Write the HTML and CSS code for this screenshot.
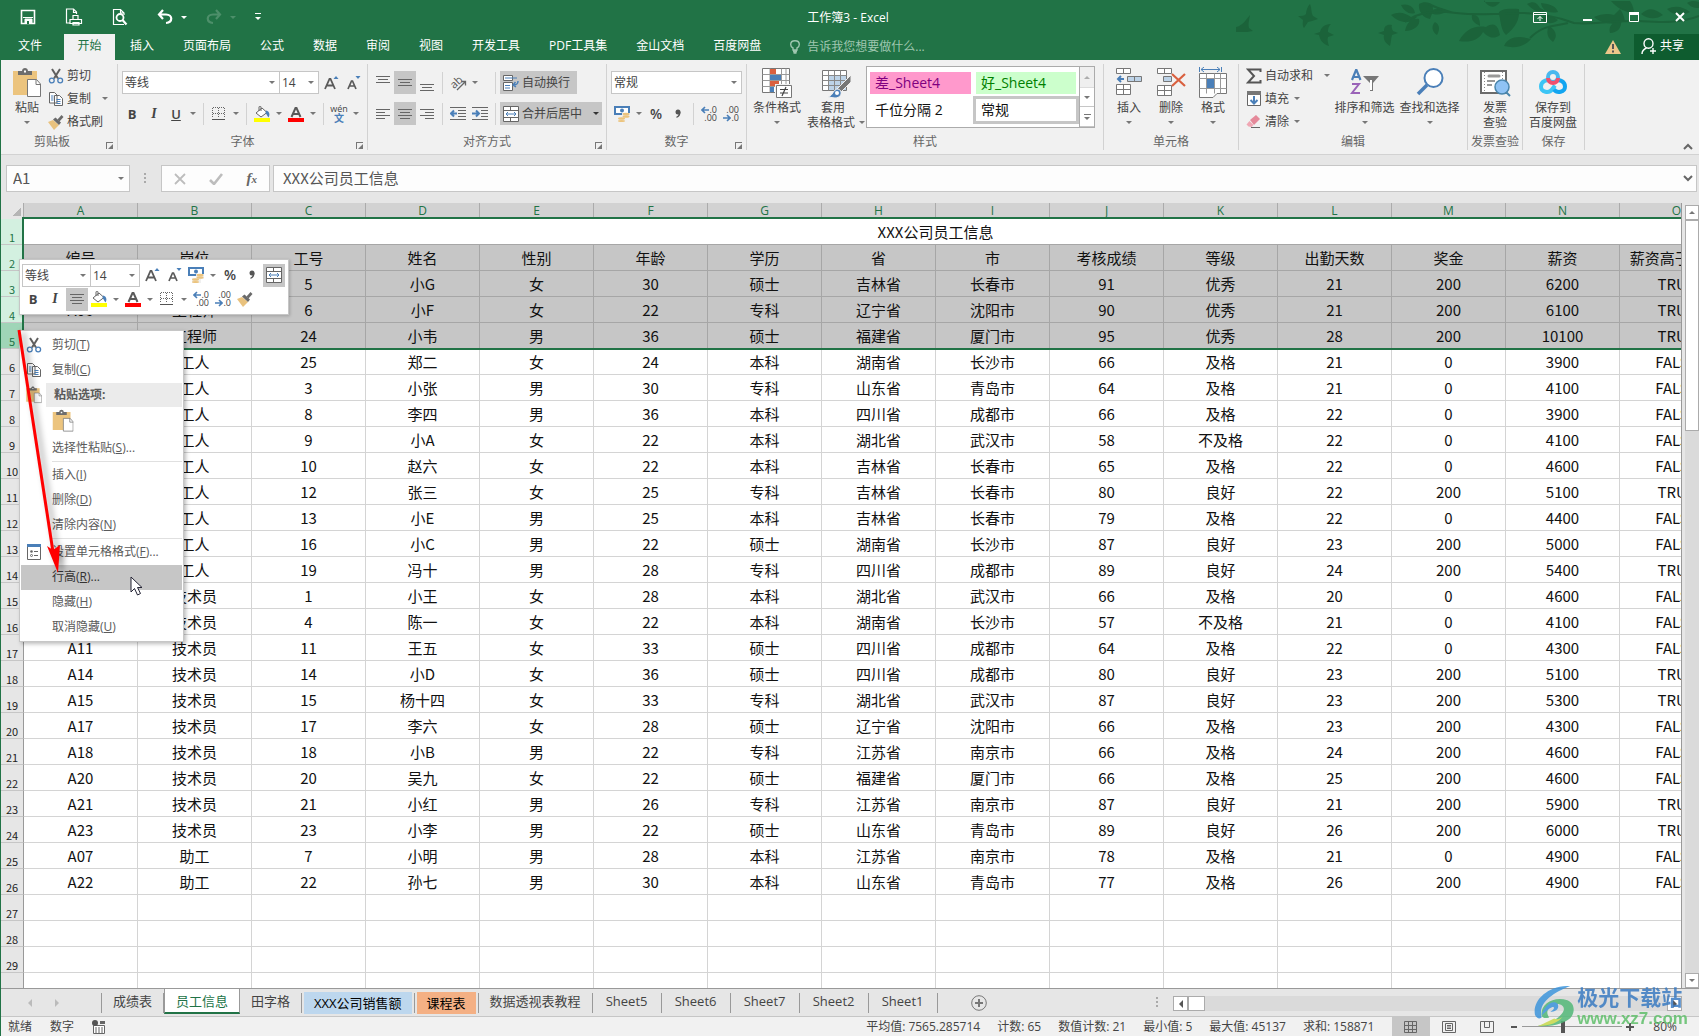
FILE: index.html
```html
<!DOCTYPE html>
<html lang="zh-CN">
<head>
<meta charset="utf-8">
<title>工作簿3 - Excel</title>
<link rel="stylesheet" href="styles.css">
</head>
<body>
<svg class="sprite" aria-hidden="true">
  <symbol id="i-cut" viewBox="0 0 16 16"><path d="M4 1l6 9.500M12 1L6 10.500" stroke="#5f5f5f" stroke-width="2" fill="none"/><circle cx="3.800" cy="12.500" r="2.400" fill="none" stroke="#4a7fb8" stroke-width="1.300"/><circle cx="12.200" cy="12.500" r="2.400" fill="none" stroke="#4a7fb8" stroke-width="1.300"/></symbol>
  <symbol id="i-copy" viewBox="0 0 16 16"><path d="M1.500 1.500h5l2.500 2.500v8h-7.500zM6.500 4.500h5l3 3v7h-8z" fill="#fff" stroke="#666"/><path d="M3 5h2.500M3 7h2.500M3 9h2.500M8.500 8.500h4M8.500 10.500h4M8.500 12.500h4" stroke="#4a7fb8"/></symbol>
  <symbol id="i-brush" viewBox="0 0 16 16"><path d="M0 8l5-2 6 5-5 5z" fill="#e9c27e"/><path d="M5 5.500l2.500-2 5.500 5-2 2.500z" fill="#6a6a6a"/><path d="M9.500 5.500l4-4.500 2 2-4 4.500z" fill="#6a6a6a"/></symbol>
  <symbol id="i-paste" viewBox="0 0 28 32"><path d="M0 4h24v24H0z" fill="#ecc47e"/><path d="M5 8V4h4c0-4 6-4 6 0h4v4z" fill="#6d6d6d"/><path d="M11 4.500h2" stroke="#fff" stroke-width="2"/><path d="M14.500 12.500h9l4 4.500v12.500h-13z" fill="#fff" stroke="#777"/><path d="M23 12.500v5h5" fill="none" stroke="#777"/></symbol>
  <symbol id="i-grow" viewBox="0 0 16 16"><path d="M2 14L6.500 4h1L12 14M3.500 10.500h7" fill="none" stroke="#5a5a5a" stroke-width="1.800"/><path d="M10.500 4L13 1l2.500 3z" fill="#4a7fb8"/></symbol>
  <symbol id="i-shrink" viewBox="0 0 16 16"><path d="M3 14l3.500-8h1L11 14M4.500 11h5" fill="none" stroke="#5a5a5a" stroke-width="1.700"/><path d="M10.500 1h5L13 4z" fill="#4a7fb8"/></symbol>
  <symbol id="i-border" viewBox="0 0 16 16"><path d="M2 1.500h12M2 7.500h12M1.500 2v10M7.500 2v10M13.500 2v10" stroke="#666" stroke-dasharray="1 1" fill="none"/><path d="M1 13.500h13" stroke="#555"/></symbol>
  <symbol id="i-fill" viewBox="0 0 16 16"><path d="M2 7l6-5 5 4.500-6 4.500z" fill="#fff" stroke="#666"/><path d="M7 5V1c0-1-2-1-2 0v4" fill="none" stroke="#666"/><path d="M12 4.500c3 .5 4.500 3.500 2.500 7-1-1-1.500-3-3-4.500z" fill="#4a7fb8"/><path d="M0 12h16v4H0z" fill="#ff0"/></symbol>
  <symbol id="i-color" viewBox="0 0 16 16"><path d="M3.500 11L7.500 2h1l4 9M5 8h6" fill="none" stroke="#5a5a5a" stroke-width="2"/><path d="M0 12h16v4H0z" fill="#f00"/></symbol>
  <symbol id="i-top" viewBox="0 0 16 16"><path d="M1 1.500h14M3 4.500h10M1 7.500h14" stroke="#666"/></symbol>
  <symbol id="i-mid" viewBox="0 0 16 16"><path d="M1 4.500h14M3 7.500h10M1 10.500h14" stroke="#666"/></symbol>
  <symbol id="i-bot" viewBox="0 0 16 16"><path d="M1 9.500h14M3 12.500h10M1 15.500h14" stroke="#666"/></symbol>
  <symbol id="i-left" viewBox="0 0 16 16"><path d="M1 3.500h14M1 6.500h9M1 9.500h14M1 12.500h9" stroke="#666"/></symbol>
  <symbol id="i-center" viewBox="0 0 16 16"><path d="M1 3.500h14M3 6.500h10M1 9.500h14M3 12.500h10" stroke="#666"/></symbol>
  <symbol id="i-right" viewBox="0 0 16 16"><path d="M1 3.500h14M6 6.500h9M1 9.500h14M6 12.500h9" stroke="#666"/></symbol>
  <symbol id="i-outdent" viewBox="0 0 16 16"><path d="M0 1.500h16M8 4.500h8M8 7.500h8M8 10.500h8M0 13.500h16" stroke="#666"/><path d="M7 7.500H2M4 4.500l-3 3 3 3" stroke="#4a7fb8" stroke-width="2" fill="none"/></symbol>
  <symbol id="i-indent" viewBox="0 0 16 16"><path d="M0 1.500h16M9 4.500h7M9 7.500h7M9 10.500h7M0 13.500h16" stroke="#666"/><path d="M0 7.500h6M4 4.500l3 3-3 3" stroke="#4a7fb8" stroke-width="2" fill="none"/></symbol>
  <symbol id="i-merge" viewBox="0 0 16 16"><path d="M.5.5h15v15H.5zM.5 4.500h15M.5 11.500h15M7.500.5v4M7.500 11.500v4" fill="#fff" stroke="#666"/><path d="M3 8h10M5 6L3 8l2 2M11 6l2 2-2 2" stroke="#4a7fb8" fill="none"/></symbol>
  <symbol id="i-wrap" viewBox="0 0 16 16"><path d="M.5.5h9v5h-9zM.5 7.500h9v8h-9z" fill="#fff" stroke="#666"/><path d="M2 3h12M2 10.500h5M2 13h5" stroke="#4a7fb8"/><path d="M15 6c0 3-1 4-5 4M12.500 7L10 10l3 2" stroke="#4a7fb8" fill="none" stroke-width="1.500"/></symbol>
  <symbol id="i-money" viewBox="0 0 16 16"><path d="M0 0h16v9H0z" fill="#4a7fb8"/><path d="M2 2h12v5H2z" fill="#fff"/><circle cx="8" cy="4.500" r="2" fill="#4a7fb8"/><path d="M8 7h8v5h-3v4H4v-5h4z" fill="#f0f0f0"/><g fill="#ecc47e"><ellipse cx="12" cy="8" rx="3.500" ry="1.300"/><ellipse cx="12" cy="10.500" rx="3.500" ry="1.300"/><ellipse cx="7.500" cy="12.500" rx="3.500" ry="1.300"/><ellipse cx="7.500" cy="15" rx="3.500" ry="1"/></g></symbol>
  <symbol id="i-comma" viewBox="0 0 16 16"><circle cx="8" cy="6" r="2.500" fill="#555"/><path d="M10.500 6c0 3-1 5-4 6v-1.500c1.500-.5 2.200-2 2.200-3.500z" fill="#555"/></symbol>
  <symbol id="i-arl" viewBox="0 0 8 8"><path d="M8 4H2M4 1L1 4l3 3" stroke="#4a7fb8" stroke-width="1.600" fill="none"/></symbol>
  <symbol id="i-arr" viewBox="0 0 8 8"><path d="M0 4h6M4 1l3 3-3 3" stroke="#4a7fb8" stroke-width="1.600" fill="none"/></symbol>
</svg>

<div class="window">
  <header class="top">
    <svg class="foliage" viewBox="0 0 460 60" aria-hidden="true">
      <g fill="#1b633a">
        <path d="M-3 27c6-1 9-6 14-12-1 6-2 9-1 13l4 3-6 1-11 0z"/>
        <path d="M59 16c4 0 6 0 8-2 0-4 2-8 4-10 2 5 1 9 3 12l5 3-6 2-4 1-4 6c-2-3-1-6-1-8z"/>
        <path d="M75 34l6-2c1-4 4-8 11-8-3 3-3 6-3 8l6 3-6 2c-1 3 0 6 1 9-6-2-9-6-10-11z"/>
        <path d="M139 33l6-2c0-5 3-7 8-6-1 2 0 4 1 6l5 2-6 2c-1 4-1 7-2 11-5-3-7-7-6-11z"/>
        <path d="M152 15c8-4 14-2 20 2l6 0c-7 8-18 6-26-2zM162 5c8-2 13 2 14 8-6 2-11-2-14-8zM166 31c2-9 7-13 14-12 2 6-5 12-14 12zM180 4c7-4 15-1 14 7l-3 8c-7-1-12-8-11-15zM196 22c5 3 5 8 2 13-5-3-6-9-2-13zM190 12c7-5 15-4 18-1-5 4-12 5-18 1z"/>
        <path d="M220 41c6-11 15-16 27-14 8-5 12-2 14 8-8 6-14 0-17-3-4 8-13 11-24 9zM233 15c7-1 8 5 8 11-6-3-9-6-8-11zM245 2h16c-5 7-12 6-16-2zM260 14c-1-4 6-6 20-5 1 11-4 19-13 26-5-5-5-12-7-21z"/>
        <path d="M265 46c4-9 14-11 27-7-6 7-15 10-27 7zM288 4c8-4 10 0 13 4l6 3c-8 3-14-2-19-7zM302 3c9 1 15 3 17 9-10 2-16-2-17-9zM310 26c7 4 9 10 4 16-6-4-7-10-4-16zM301 18c5-3 12-3 18 2-6 5-13 4-18-2z"/>
        <path d="M355 17c7-3 14-4 20-2l6-6c3 4 4 8 5 12-8 4-22 4-31-4zM371 33c-2-7 3-12 11-12 1 7-4 12-11 12zM372 1h19c3 4 4 9 4 13-9-2-17-6-23-13zM402 14c8-8 15-5 22 1-6 4-14 5-22-1zM428 9c9-4 16-2 23 3-8 4-17 4-23-3zM448 3c5-3 8-2 12-1v6c-6 0-9-2-12-5z"/>
      </g>
      <path d="M166 22c16-12 34-11 51-9s34 1 49 1M266 14c28-4 56 4 69 9 22 2 45-3 64-2s42 3 61-5M291 38c14-14 27-12 38-15M190 4c11 6 18 7 26 9" fill="none" stroke="#1b633a" stroke-width="2"/>
    </svg>
    <div class="titlebar">
      <div class="quick">
        <button aria-label="保存"><svg width="16" height="16" viewBox="0 0 16 16"><path d="M1.500 1.500h13v13h-13z" fill="none" stroke="#fff" stroke-width="1.600"/><path d="M3 8.500h10M5 10h7v4H5z" fill="#fff" stroke="#fff" stroke-width="1"/><path d="M7 12h2v3H7z" fill="#217346"/></svg></button>
        <button aria-label="快速打印"><svg width="18" height="18" viewBox="0 0 18 18" fill="none" stroke="#fff" stroke-width="1.200"><path d="M5 15H1.500v-14h7l3 3v2M8.500 1v3.500h3"/><path d="M5 11.500h11.500v4H5zM8 11V7.500h5V11M8 14.500h6v2.500H8z"/></svg></button>
        <button aria-label="打印预览"><svg width="16" height="18" viewBox="0 0 16 18" fill="none" stroke="#fff" stroke-width="1.200"><path d="M12 16.500H1.500v-15h7l3.500 3.500v2M8.500 1.500V5H12"/><circle cx="8" cy="9.500" r="3.500" stroke-width="1.800"/><path d="M10.500 12l4 4.500" stroke-width="2.200"/></svg></button>
        <button aria-label="撤消"><svg width="16" height="16" viewBox="0 0 16 16" fill="none" stroke="#fff" stroke-width="2.200"><path d="M6 1L2 5.500 6 10M2 5.500h7c7 0 7 8 0 8.500"/></svg></button>
        <button class="drop white" aria-label="撤消列表"></button>
        <button aria-label="恢复"><svg width="16" height="16" viewBox="0 0 16 16" fill="none" stroke="#4d8f6a" stroke-width="2.200"><path d="M10 1l4 4.500L10 10M14 5.500H7c-7 0-7 8 0 8.500"/></svg></button>
        <button class="drop faint" aria-label="恢复列表"></button>
        <button class="custom" aria-label="自定义快速访问工具栏"><svg width="6" height="8" viewBox="0 0 6 8"><path d="M0 .5h6" stroke="#fff"/><path d="M0 4h6L3 7z" fill="#fff"/></svg></button>
      </div>
      <h1>工作簿3 - Excel</h1>
      <div class="controls">
        <button aria-label="功能区显示选项"><svg width="14" height="11" viewBox="0 0 14 11" fill="none" stroke="#fff"><path d="M.5.5h13v10H.5zM1 2.500h12M7 9V4.500M4.500 7L7 4.500 9.500 7"/></svg></button>
        <button aria-label="最小化"><svg width="10" height="10" viewBox="0 0 10 10"><path d="M0 7h9v2H0z" fill="#fff"/></svg></button>
        <button aria-label="最大化"><svg width="10" height="10" viewBox="0 0 10 10"><path d="M.5.5h9v9h-9z" fill="none" stroke="#fff"/><path d="M0 0h10v3H0z" fill="#fff"/></svg></button>
        <button aria-label="关闭"><svg width="10" height="10" viewBox="0 0 10 10"><path d="M1 1l8 8M9 1L1 9" stroke="#fff" stroke-width="2"/></svg></button>
      </div>
    </div>
    <nav class="tabs">
      <button class="file">文件</button>
      <button class="active">开始</button>
      <button>插入</button>
      <button>页面布局</button>
      <button>公式</button>
      <button>数据</button>
      <button>审阅</button>
      <button>视图</button>
      <button>开发工具</button>
      <button>PDF工具集</button>
      <button>金山文档</button>
      <button>百度网盘</button>
      <button class="tell"><svg width="10" height="14" viewBox="0 0 10 14" fill="none" stroke="#9fc7b0" stroke-width="1.400"><path d="M3 10V8C1 7 .7 5.500.7 4.500c0-5 8.600-5 8.600 0C9.300 5.500 9 7 7 8v2zM3 11.500h4M3.500 13h3"/></svg>告诉我您想要做什么...</button>
      <span class="warn"><svg width="16" height="14" viewBox="0 0 16 14"><path d="M8 0l8 14H0z" fill="#ecc78a"/><path d="M8 4v5M8 10.500v2" stroke="#555" stroke-width="2"/></svg></span>
      <button class="share"><svg width="16" height="17" viewBox="0 0 16 17" fill="none" stroke="#fff" stroke-width="1.400"><ellipse cx="7.500" cy="5.500" rx="4.500" ry="4.800"/><path d="M1 16c0-3 2-5 4.500-6M9 13h6M12 10v6"/></svg>共享</button>
    </nav>
  </header>

  <section class="ribbon" aria-label="功能区">
    <div class="group g-clip">
      <div class="body">
        <button class="big"><svg width="28" height="32"><use href="#i-paste"/></svg><span>粘贴</span><i class="caret"></i></button>
        <div class="stack">
          <button><svg width="16" height="16"><use href="#i-cut"/></svg>剪切</button>
          <button><svg width="16" height="16"><use href="#i-copy"/></svg>复制<i class="caret far"></i></button>
          <button><svg width="16" height="16"><use href="#i-brush"/></svg>格式刷</button>
        </div>
      </div>
      <div class="label">剪贴板<i class="launch"></i></div>
    </div>
    <div class="group g-font">
      <div class="rows">
        <div class="row combos">
          <select class="w-font" aria-label="字体"><option>等线</option></select><select class="w-size" aria-label="字号"><option>14</option></select>
          <button class="ib" aria-label="增大字号"><svg width="16" height="16"><use href="#i-grow"/></svg></button>
          <button class="ib" aria-label="减小字号"><svg width="16" height="16"><use href="#i-shrink"/></svg></button>
        </div>
        <div class="row">
          <button class="ib bold">B</button><button class="ib ital">I</button><button class="ib under">U</button><button class="drop" aria-label="下划线样式"></button><i class="sep"></i>
          <button class="ib" aria-label="边框"><svg width="16" height="16"><use href="#i-border"/></svg></button><button class="drop" aria-label="边框样式"></button><i class="sep"></i>
          <button class="ib" aria-label="填充颜色"><svg width="16" height="16"><use href="#i-fill"/></svg></button><button class="drop" aria-label="填充颜色列表"></button>
          <button class="ib" aria-label="字体颜色"><svg width="16" height="16"><use href="#i-color"/></svg></button><button class="drop" aria-label="字体颜色列表"></button><i class="sep"></i>
          <button class="ib wen"><span>wén</span><b>文</b></button><button class="drop" aria-label="拼音设置"></button>
        </div>
      </div>
      <div class="label">字体<i class="launch"></i></div>
    </div>
    <div class="group g-align">
      <div class="rows">
        <div class="row">
          <button class="ib" aria-label="顶端对齐"><svg width="16" height="16"><use href="#i-top"/></svg></button>
          <button class="ib on" aria-label="垂直居中"><svg width="16" height="16"><use href="#i-mid"/></svg></button>
          <button class="ib" aria-label="底端对齐"><svg width="16" height="16"><use href="#i-bot"/></svg></button><i class="sep"></i>
          <div class="pair"><button class="ib orient" aria-label="方向"><svg width="18" height="18" viewBox="0 0 18 18"><text x="1" y="13" transform="rotate(-42 6 9)">ab</text><path d="M8 16l8-8M12.500 7.500H16.500V11.500" fill="none" stroke="#666" stroke-width="1.300"/></svg></button><button class="drop" aria-label="方向列表"></button></div><i class="sep"></i>
          <button class="wide on w-wrap"><svg width="16" height="16"><use href="#i-wrap"/></svg>自动换行</button>
        </div>
        <div class="row">
          <button class="ib" aria-label="左对齐"><svg width="16" height="16"><use href="#i-left"/></svg></button>
          <button class="ib on" aria-label="居中"><svg width="16" height="16"><use href="#i-center"/></svg></button>
          <button class="ib" aria-label="右对齐"><svg width="16" height="16"><use href="#i-right"/></svg></button><i class="sep"></i>
          <div class="pair"><button class="ib" aria-label="减少缩进量"><svg width="16" height="16"><use href="#i-outdent"/></svg></button><button class="ib" aria-label="增加缩进量"><svg width="16" height="16"><use href="#i-indent"/></svg></button></div><i class="sep"></i>
          <button class="wide on w-merge"><svg width="16" height="16"><use href="#i-merge"/></svg>合并后居中<i class="caret far dark"></i></button>
        </div>
      </div>
      <div class="label">对齐方式<i class="launch"></i></div>
    </div>
    <div class="group g-num">
      <div class="rows">
        <div class="row"><select class="w-num" aria-label="数字格式"><option>常规</option></select></div>
        <div class="row">
          <button class="ib" aria-label="会计数字格式"><svg width="16" height="16"><use href="#i-money"/></svg></button><button class="drop" aria-label="货币列表"></button>
          <button class="ib pct">%</button><button class="ib" aria-label="千位分隔样式"><svg width="16" height="16"><use href="#i-comma"/></svg></button><i class="sep"></i>
          <button class="ib dec"><span><svg width="8" height="8"><use href="#i-arl"/></svg>.0</span><span>.00</span></button>
          <button class="ib dec"><span>.00</span><span><svg width="8" height="8"><use href="#i-arr"/></svg>.0</span></button>
        </div>
      </div>
      <div class="label">数字<i class="launch"></i></div>
    </div>
    <div class="group g-style">
      <div class="body">
        <button class="big w-cond"><svg width="32" height="32" viewBox="0 0 32 32"><path d="M1.500 1.500h27v24h-27z" fill="#fff" stroke="#777"/><path d="M9 1.500v24M20.500 1.500v24M25 1.500v24M1.500 7.500h27M1.500 13.500h27M1.500 19.500h27" stroke="#999"/><path d="M9 2h6v5H9zM9 14h9v5H9z" fill="#d9603f"/><path d="M9 8h11v5H9zM9 20h4v5H9z" fill="#4a7fb8"/><path d="M14 17h17v15H14z" fill="#f0f0f0"/><path d="M15.500 18.500h15v12h-15z" fill="#fff" stroke="#777"/><path d="M19 22.500h8M19 26h8M25 20l-4 9" stroke="#444" stroke-width="1.200"/></svg><span>条件格式</span><i class="caret"></i></button>
        <button class="big w-table"><svg width="32" height="32" viewBox="0 0 32 32"><path d="M2.500 3.500h24v20h-24z" fill="#fff" stroke="#777"/><path d="M9 9h17v14H9z" fill="#bdd3e8"/><path d="M8.500 3.500v20M14.500 3.500v20M20.500 3.500v20M2.500 8.500h24M2.500 13.500h24M2.500 18.500h24" stroke="#888"/><path d="M31 8v7L21 25l-4-3z" fill="#777" stroke="#f0f0f0"/><path d="M8 30c5-1 5-8 10-8 5 1 4 9-3 9z" fill="#4a7fb8" stroke="#f0f0f0"/><circle cx="17" cy="26" r="2" fill="#fff"/></svg><span>套用</span><span class="tail">表格格式<i class="caret"></i></span></button>
        <div class="gallery">
          <div class="cells">
            <button class="bad">差_Sheet4</button><button class="good">好_Sheet4</button>
            <button>千位分隔 2</button><button class="picked">常规</button>
          </div>
          <div class="scroller"><button class="dim" aria-label="上一行"><i class="caret up"></i></button><button aria-label="下一行"><i class="caret"></i></button><button aria-label="其他"><i class="bar"></i><i class="caret"></i></button></div>
        </div>
      </div>
      <div class="label">样式</div>
    </div>
    <div class="group g-cells">
      <div class="body">
        <button class="big"><svg width="28" height="32" viewBox="0 0 28 32" fill="#fff" stroke="#777"><path d="M1.500 1.500h14v5h-14zM8.500 1.500v5M1.500 17.500h14v10h-14zM8.500 17.500v10M1.500 22.500h14"/><path d="M12.500 9.500h14v5h-14zM19.500 9.500v5" fill="#bdd3e8"/><path d="M9 12H3M6 9l-3 3 3 3" fill="none" stroke="#4a7fb8" stroke-width="2"/></svg><span>插入</span><i class="caret"></i></button>
        <button class="big"><svg width="30" height="32" viewBox="0 0 30 32" fill="#fff" stroke="#777"><path d="M1.500 1.500h14v5h-14zM8.500 1.500v5M1.500 18.500h14v10h-14zM8.500 18.500v10M1.500 23.500h14"/><path d="M7.500 9.500h8v5h-8z" fill="#bdd3e8"/><path d="M16 7l13 12M29 7L16 19" stroke="#d9603f" stroke-width="2.200"/></svg><span>删除</span><i class="caret"></i></button>
        <button class="big"><svg width="28" height="32" viewBox="0 0 28 32" fill="#fff" stroke="#777"><path d="M.5 6.500h27v20H18l-4 4H.500z"/><path d="M7.500 6.500v20M15.500 6.500v20M21.500 6.500v20M.5 11.500h27M.5 21.500h27" stroke="#999"/><path d="M8 12h7v9H8z" fill="#4a7fb8" stroke="none"/><path d="M.5 0v5M22.500 0v5M2 2.500h19M5 0L2 2.500 5 5M18 0l3 2.500L18 5" stroke="#4a7fb8" fill="none"/></svg><span>格式</span><i class="caret"></i></button>
      </div>
      <div class="label">单元格</div>
    </div>
    <div class="group g-edit">
      <div class="body">
        <div class="stack">
          <button><svg width="16" height="16" viewBox="0 0 16 16"><path d="M14.500 4V1.500H2L8 8l-6 6.500h12.500V12" fill="none" stroke="#555" stroke-width="2"/></svg>自动求和<i class="caret far"></i></button>
          <button><svg width="16" height="16" viewBox="0 0 16 16"><path d="M1.500 1.500h13v13h-13z" fill="#fff" stroke="#666"/><path d="M1 0h14v4H1z" fill="#777"/><path d="M8 5v7M4.500 9L8 12.500 11.500 9" fill="none" stroke="#4a7fb8" stroke-width="2"/></svg>填充<i class="caret near"></i></button>
          <button><svg width="16" height="16" viewBox="0 0 16 16"><path d="M4 6l6-5 4 4-6 6z" fill="#e5899a"/><path d="M3.500 7l4 4-2 2-3-.5-2-2z" fill="#f0a7b4"/><path d="M5 13.500h9" stroke="#666"/></svg>清除<i class="caret near"></i></button>
        </div>
        <button class="big w-sort"><svg width="30" height="32" viewBox="0 0 30 32"><path d="M2 13L6 3h.5l4 10M3.500 10h6" fill="none" stroke="#4a7fb8" stroke-width="2.200"/><path d="M2 17h7L2 26h8" fill="none" stroke="#9a63b8" stroke-width="2"/><path d="M13 9h16l-6 7v8h-3v-8z" fill="#777"/><path d="M20 13h2v10h-2z" fill="#fff"/></svg><span>排序和筛选</span><i class="caret"></i></button>
        <button class="big w-sort"><svg width="28" height="32" viewBox="0 0 28 32"><circle cx="17.500" cy="11" r="9" fill="#fff" stroke="#4a7fb8" stroke-width="2"/><path d="M11 18L2 27" stroke="#4a7fb8" stroke-width="3.500"/></svg><span>查找和选择</span><i class="caret"></i></button>
      </div>
      <div class="label">编辑</div>
    </div>
    <div class="group g-inv">
      <div class="body">
        <button class="big"><svg width="32" height="32" viewBox="0 0 32 32"><path d="M2 4h25v22H2z" fill="#fff" stroke="#6b6b6b" stroke-width="2"/><path d="M5.500 5v20M23.500 5v8" stroke="#888" stroke-dasharray="1 2"/><path d="M10 9h10" stroke="#999" stroke-width="3" stroke-linecap="round"/><path d="M8 14h8M8 18h5" stroke="#777" stroke-width="1.500"/><circle cx="23" cy="20" r="7" fill="#8fc3f5" stroke="#4a86ad" stroke-width="1.500"/><path d="M27 25l4 4" stroke="#4a86ad" stroke-width="2"/></svg><span>发票</span><span>查验</span></button>
      </div>
      <div class="label">发票查验</div>
    </div>
    <div class="group g-save">
      <div class="body">
        <button class="big"><svg width="28" height="32" viewBox="0 0 28 32" fill="none" stroke-width="4"><path d="M11 14c-4-2-9 1-9 5.500 0 6 8 7 11 3l3-4" stroke="#3cc5f5"/><path d="M17 14c4-2 9 1 9 5.500 0 6-8 7-11 3" stroke="#12a5f0"/><circle cx="14" cy="10" r="5" stroke="#4ab8ee"/><path d="M9 11a5 5 0 0 0 10 0" stroke="#f0506e"/></svg><span>保存到</span><span>百度网盘</span></button>
      </div>
      <div class="label">保存</div>
    </div>
    <button class="collapse" aria-label="折叠功能区"><svg width="10" height="7" viewBox="0 0 10 7"><path d="M1 6l4-4 4 4" fill="none" stroke="#666" stroke-width="2"/></svg></button>
  </section>

  <section class="formula">
    <label class="namebox"><input value="A1" aria-label="名称框"><i class="caret"></i></label>
    <span class="dots"></span>
    <div class="fx">
      <button aria-label="取消"><svg width="12" height="12" viewBox="0 0 12 12"><path d="M1 1l10 10M11 1L1 11" stroke="#bdbdbd" stroke-width="1.800"/></svg></button>
      <button aria-label="输入"><svg width="14" height="12" viewBox="0 0 14 12"><path d="M1 7l4 4 8-10" fill="none" stroke="#bdbdbd" stroke-width="2.600"/></svg></button>
      <button class="fn" aria-label="插入函数">f<sub>x</sub></button>
    </div>
    <label class="fbox"><input value="XXX公司员工信息" aria-label="编辑栏"><svg width="10" height="7" viewBox="0 0 10 7"><path d="M1 1l4 4 4-4" fill="none" stroke="#666" stroke-width="2"/></svg></label>
  </section>

  <main class="work">
    <div class="sheet">
      <table>
        <colgroup><col class="c-row"></colgroup>
        <thead><tr id="letters"></tr></thead>
        <tbody id="cells"></tbody>
      </table>
      <div class="selection"></div>
    </div>
    <div class="vscroll">
      <button aria-label="向上滚动"><i class="caret up"></i></button>
      <div class="vthumb"></div>
      <div class="vtrack"></div>
      <button aria-label="向下滚动"><i class="caret"></i></button>
    </div>
  </main>

  <nav class="sheets">
    <div class="nav"><button aria-label="上一张"><i class="tri l"></i></button><button aria-label="下一张"><i class="tri r"></i></button></div>
    <button class="tab">成绩表</button>
    <button class="tab current">员工信息</button>
    <button class="tab">田字格</button>
    <button class="tab blue"><span>XXX公司销售额</span></button>
    <button class="tab orange"><span>课程表</span></button>
    <button class="tab">数据透视表教程</button>
    <button class="tab latin">Sheet5</button>
    <button class="tab latin">Sheet6</button>
    <button class="tab latin">Sheet7</button>
    <button class="tab latin">Sheet2</button>
    <button class="tab latin">Sheet1</button>
    <button class="add" aria-label="新工作表"><svg width="16" height="16" viewBox="0 0 16 16" fill="none" stroke="#777"><circle cx="8" cy="8" r="7.300"/><path d="M8 4v8M4 8h8" stroke-width="2"/></svg></button>
    <span class="dots push"></span>
    <div class="hscroll"><button aria-label="向左滚动"><i class="tri l k"></i></button><div class="hthumb"></div><div class="htrack"></div><button aria-label="向右滚动"><i class="tri r k"></i></button></div>
  </nav>

  <footer class="status">
    <span>就绪</span><span>数字</span>
    <svg width="14" height="14" viewBox="0 0 14 14"><path d="M1.500 5.500h11v8h-11z" fill="#fff" stroke="#666"/><path d="M8 1h5v3H8z" fill="#666"/><circle cx="3" cy="3" r="3" fill="#555"/><path d="M3 8h8M3 10h8M3 12h8" stroke="#666" stroke-dasharray="2 1"/></svg>
    <div class="stats"><span>平均值: 7565.285714</span><span>计数: 65</span><span>数值计数: 21</span><span>最小值: 5</span><span>最大值: 45137</span><span>求和: 158871</span></div>
    <div class="views">
      <button class="on" aria-label="普通"><svg width="14" height="12" viewBox="0 0 14 12"><path d="M.5.5h12v11H.5zM4.500.5v11M8.500.5v11M.5 4.500h12M.5 8.500h12" fill="none" stroke="#666"/></svg></button>
      <button aria-label="页面布局"><svg width="14" height="12" viewBox="0 0 14 12"><path d="M.5.5h13v11H.5zM3.500 2.500h7v7h-7zM5 4.500h4M5 6h4M5 7.500h4" fill="none" stroke="#666"/></svg></button>
      <button aria-label="分页预览"><svg width="14" height="12" viewBox="0 0 14 12"><path d="M.5.5h13v11H.5zM4.500.5v6h5v-6" fill="none" stroke="#666"/></svg></button>
    </div>
    <div class="slider">
      <button aria-label="缩小"><svg width="8" height="8" viewBox="0 0 8 8"><path d="M1 3h6v2H1z" fill="#555"/></svg></button>
      <input type="range" min="0" max="100" value="40" aria-label="显示比例">
      <button aria-label="放大"><svg width="8" height="8" viewBox="0 0 8 8"><path d="M0 3h3V0h2v3h3v2H5v3H3V5H0z" fill="#555"/></svg></button>
    </div>
    <span>80%</span>
  </footer>

  <div class="mini" role="toolbar" aria-label="浮动工具栏">
    <div class="row">
      <select class="m-font" aria-label="字体"><option>等线</option></select><select class="m-size" aria-label="字号"><option>14</option></select>
      <button class="ib" aria-label="增大字号"><svg width="16" height="16"><use href="#i-grow"/></svg></button>
      <button class="ib" aria-label="减小字号"><svg width="16" height="16"><use href="#i-shrink"/></svg></button>
      <button class="ib" aria-label="会计数字格式"><svg width="16" height="16"><use href="#i-money"/></svg></button><button class="drop" aria-label="货币列表"></button>
      <button class="ib pct">%</button><button class="ib" aria-label="千位分隔样式"><svg width="16" height="16"><use href="#i-comma"/></svg></button>
      <button class="ib on" aria-label="合并后居中"><svg width="16" height="16"><use href="#i-merge"/></svg></button>
    </div>
    <div class="row">
      <button class="ib bold">B</button><button class="ib ital">I</button>
      <button class="ib on" aria-label="居中"><svg width="16" height="16"><use href="#i-center"/></svg></button>
      <button class="ib" aria-label="填充颜色"><svg width="16" height="16"><use href="#i-fill"/></svg></button><button class="drop" aria-label="填充颜色列表"></button>
      <button class="ib" aria-label="字体颜色"><svg width="16" height="16"><use href="#i-color"/></svg></button><button class="drop" aria-label="字体颜色列表"></button>
      <button class="ib" aria-label="边框"><svg width="16" height="16"><use href="#i-border"/></svg></button><button class="drop" aria-label="边框样式"></button>
      <button class="ib dec"><span><svg width="8" height="8"><use href="#i-arl"/></svg>.0</span><span>.00</span></button>
      <button class="ib dec"><span>.00</span><span><svg width="8" height="8"><use href="#i-arr"/></svg>.0</span></button>
      <button class="ib" aria-label="格式刷"><svg width="16" height="16"><use href="#i-brush"/></svg></button>
    </div>
  </div>

  <div class="menu" role="menu">
    <button role="menuitem"><svg width="16" height="16"><use href="#i-cut"/></svg><span>剪切(<u>T</u>)</span></button>
    <button role="menuitem"><svg width="16" height="16"><use href="#i-copy"/></svg><span>复制(<u>C</u>)</span></button>
    <div class="head"><svg width="16" height="18" viewBox="0 0 28 32"><use href="#i-paste"/></svg><strong>粘贴选项:</strong></div>
    <button class="icon" role="menuitem" aria-label="粘贴"><svg width="22" height="24" viewBox="0 0 28 32"><use href="#i-paste"/></svg></button>
    <button role="menuitem"><span>选择性粘贴(<u>S</u>)...</span></button>
    <hr>
    <button role="menuitem"><span>插入(<u>I</u>)</span></button>
    <button role="menuitem"><span>删除(<u>D</u>)</span></button>
    <button role="menuitem"><span>清除内容(<u>N</u>)</span></button>
    <hr>
    <button role="menuitem"><svg width="14" height="16" viewBox="0 0 14 16"><path d="M.5.5h13v15H.5z" fill="#fff" stroke="#666"/><path d="M0 0h14v3H0z" fill="#4a7fb8"/><path d="M7 7.500h4M7 11.500h4" stroke="#666"/><circle cx="4.500" cy="7.500" r="1.300" fill="#666"/><circle cx="4.500" cy="11.500" r="1" fill="none" stroke="#666"/></svg><span>设置单元格格式(<u>F</u>)...</span></button>
    <button class="hover" role="menuitem"><span>行高(<u>R</u>)...</span></button>
    <button role="menuitem"><span>隐藏(<u>H</u>)</span></button>
    <button role="menuitem"><span>取消隐藏(<u>U</u>)</span></button>
  </div>

  <svg class="arrow" width="60" height="260" viewBox="0 0 60 260" aria-hidden="true"><path d="M4 4l34 222" stroke="#f00" stroke-width="3"/><path d="M32 220l6 4 7-5-2 28z" fill="#f00"/></svg>
  <svg class="pointer" width="14" height="20" viewBox="0 0 14 20" aria-hidden="true"><path d="M1 1v15l3.500-3.500L7.500 19l3-1.500-3-6H12z" fill="#fff" stroke="#223"/></svg>

  <div class="watermark">
    <svg width="44" height="42" viewBox="0 0 44 44" aria-hidden="true"><path d="M38 0C15-1-2 15 1 30c2 4 4 5 7 3C4 18 18 8 38 0z" fill="#3d95dc"/><path d="M8 31C6 20 20 10 35 15c7 3 8 10 5 16-4 7-18 12-36 11 15-4 24-9 27-16 2-6-6-10-13-5-5 4-5 8-2 12-4 1-7 1-8-2z" fill="#52b878"/><path d="M4 42c7-3 11-5 17-8 4 2 7 0 9-2-4 6-13 10-26 10z" fill="#c8d94a"/><path d="M8 31c2-10 12-18 17-12 2 6-4 8-8 8 4-2 5-5 3-5s-5 2-12 9z" fill="#3d95dc"/></svg>
    <p><b>极光下载站</b><em>www.xz7.com</em></p>
  </div>
</div>
<script src="script.js"></script>
</body>
</html>
```
FILE: styles.css
```css
* { box-sizing: border-box; }
body { margin: 0; font: 12px/16px "Open Sans", "Noto Sans CJK SC", sans-serif; color: #444; }
button { border: 0; padding: 0; margin: 0; background: none; font: inherit; color: inherit; display: flex; align-items: center; justify-content: center; white-space: nowrap; }
svg { display: block; flex: none; }
.sprite { position: absolute; width: 0; height: 0; }
.window { position: relative; height: 100vh; display: flex; flex-direction: column; overflow: hidden; background: #e6e6e6; border-left: 1px solid #217346; }

/* title bar and ribbon tabs */
.top { position: relative; background: #217346; color: #fff; flex: none; }
.foliage { position: absolute; right: 0; top: 0; width: 460px; height: 60px; overflow: visible; }
.titlebar { position: relative; display: flex; height: 34px; align-items: center; }
.titlebar h1 { flex: 1; margin: 0; padding-top: 1px; font-size: 12px; font-weight: 400; text-align: center; }
.quick { display: flex; align-items: center; width: 298px; padding-left: 19px; }
.quick button { height: 20px; margin-right: 29px; }
.quick button:nth-child(4), .quick button:nth-child(6) { margin-right: 5px; }
.quick .drop { margin-right: 16px; }
.controls { display: flex; align-items: center; justify-content: flex-end; width: 302px; padding-right: 14px; gap: 36px; }
.tabs { position: relative; display: flex; height: 26px; }
.tabs button { padding: 0 14px 2px; margin-right: 1px; }
.tabs .file { width: 63px; margin: 0; padding: 0 5px 2px 0; }
.tabs .active { width: 51px; padding: 0 0 2px; background: #f1f1f1; color: #217346; }
.tabs .tell { color: #9fc7b0; gap: 7px; padding-bottom: 0; }
.warn { margin-left: auto; padding: 6px 13px 0 0; }
.tabs .share { width: 65px; margin: 0; padding: 0 8px 2px 0; gap: 3px; background: #0e5c2f; }

/* ribbon */
.ribbon { position: relative; display: flex; flex: none; height: 95px; padding-top: 4px; background: #f1f1f1; border-bottom: 1px solid #d2d2d2; }
.group { display: flex; flex-direction: column; height: 86px; border-right: 1px solid #d2d2d2; flex: none; }
.g-clip { width: 117px; }
.g-font { width: 250px; }
.g-align { width: 239px; }
.g-num { width: 140px; }
.g-style { width: 357px; }
.g-cells { width: 135px; }
.g-edit { width: 229px; }
.g-inv { width: 55px; }
.g-save { width: 62px; }
.body { display: flex; height: 71px; padding: 0 5px; }
.g-cells .body { padding: 0 4px; }
.label { position: relative; text-align: center; line-height: 16px; color: #666; white-space: nowrap; }
.launch { position: absolute; right: 4px; bottom: 1px; width: 7px; height: 7px; border: solid #777; border-width: 1px 0 0 1px; }
.launch::after { content: ""; position: absolute; right: 0; bottom: 0; border: solid transparent; border-width: 0 0 5px 5px; border-bottom-color: #777; }
.g-clip .label { padding-right: 14px; }
.caret { flex: none; width: 0; height: 0; border: 3px solid transparent; border-top-color: #777; border-bottom: 0; }
.caret.up { border-top: 0; border-bottom: 3px solid #777; }
.caret.dark { border-top-color: #333; }
.drop { width: 12px; height: 22px; }
.drop::after { content: ""; border: 3px solid transparent; border-top-color: #777; border-bottom: 0; }
.drop.white::after { border-top-color: #fff; }
.drop.faint::after { border-top-color: #4d8f6a; }
.big { flex-direction: column; justify-content: flex-start; width: 42px; padding-top: 3px; line-height: 15px; }
.big svg { margin-bottom: 1px; }
.big > .caret { margin-top: 6px; }
.big .tail { display: flex; align-items: center; gap: 4px; }
.g-inv .big { width: 44px; }
.g-save .big { width: 50px; }
.w-cond { width: 50px; margin-right: 4px; }
.w-table { width: 60px; }
.w-table > span:nth-child(2) { margin-right: 6px; }
.w-sort { width: 65px; }
.stack { display: flex; flex-direction: column; }
.stack button { height: 23px; justify-content: flex-start; gap: 3px; }
.g-edit .stack { width: 88px; padding-left: 2px; }
.far { margin-left: 8px; }
.near { margin-left: 2px; }
.rows { display: flex; flex-direction: column; gap: 8px; height: 71px; padding: 7px 0 0 3px; }
.g-align .rows, .g-num .rows { padding-left: 4px; }
.row { display: flex; align-items: center; height: 23px; }
.ib { width: 22px; height: 23px; flex: none; }
.on { background: #c6c6c6; }
.sep { width: 1px; height: 22px; margin: 0 4px; background: #d2d2d2; }
.combos { padding-left: 1px; }
select { appearance: none; height: 23px; border: 1px solid #c6c6c6; border-radius: 0; padding: 0 0 0 2px; color: #444; font: 12px "Open Sans", "Noto Sans CJK SC", sans-serif; background: #fff url("data:image/svg+xml,%3Csvg xmlns='http://www.w3.org/2000/svg' width='6' height='3'%3E%3Cpath d='M0 0h6L3 3z' fill='%23777'/%3E%3C/svg%3E") no-repeat right 4px center; }
.w-font { width: 158px; }
.w-size { width: 40px; margin-left: -1px; margin-right: 1px; }
.w-num { width: 131px; }
.bold { font-size: 13px; font-weight: 700; }
.ital { font: italic 700 14px "Liberation Serif", serif; }
.under { font-size: 13px; font-weight: 600; text-decoration: underline; }
.pct { font-size: 14px; font-weight: 600; }
.orient svg { overflow: visible; }
.orient text { font-size: 11px; fill: #555; }
.wen { flex-direction: column; font-size: 9px; line-height: 8px; }
.wen b { font-size: 10px; line-height: 10px; color: #4a7fb8; }
.pair { display: flex; width: 44px; }
.dec { flex-direction: column; align-items: flex-end; padding-right: 3px; font-size: 9px; line-height: 8px; }
.dec span { display: flex; align-items: center; }
.wide { height: 23px; gap: 3px; padding: 0 3px; justify-content: flex-start; }
.w-wrap { width: 77px; }
.w-merge { width: 102px; }
.gallery { display: flex; width: 229px; height: 62px; margin-top: 2px; background: #fff; border: 1px solid #ababab; }
.cells { flex: 1; display: grid; grid-template-columns: 104px 106px; grid-template-rows: 24px 28px; padding: 4px 0 0 1px; gap: 1px; }
.cells button { justify-content: flex-start; padding-left: 5px; margin-left: 2px; font-size: 14px; color: #111; }
.cells .bad { background: #ff99cc; color: #800080; margin: 1px 1px 1px 2px; }
.cells .good { background: #ccffcc; color: #008000; margin: 1px 3px; }
.cells .picked { border: 3px solid #c6c6c6; margin: 0; }
.scroller { width: 15px; display: grid; grid-template-rows: 21px 19px 20px; border-left: 1px solid #ababab; }
.scroller button { flex-direction: column; gap: 2px; border-bottom: 1px solid #c6c6c6; }
.scroller .dim { background: #e6e6e6; opacity: .6; }
.bar { width: 7px; height: 1px; background: #777; }
.collapse { margin: auto 6px 4px auto; }

/* formula bar */
.formula { display: flex; flex: none; height: 48px; padding: 10px 2px 11px 5px; }
.namebox, .fx, .fbox { display: flex; align-items: center; border: 1px solid #c6c6c6; background: #fdfdfd; }
.namebox { width: 124px; padding-right: 5px; }
.formula input { flex: 1; min-width: 0; height: 24px; border: 0; background: none; font: 15px "Noto Sans CJK SC", sans-serif; color: #555; padding: 0 0 2px; }
.namebox input { padding: 0 6px 2px; }
.fbox { flex: 1; padding: 0 3px 0 9px; }
.dots { width: 2px; height: 10px; margin: 8px 15px 0 14px; background: repeating-linear-gradient(#aaa 0 2px, transparent 2px 4px); }
.fx { width: 109px; margin-right: 3px; padding: 0 12px; justify-content: space-between; }
.fn { font: italic 700 15px "Liberation Serif", serif; color: #666; }
.fn sub { font-size: 11px; vertical-align: baseline; }

/* worksheet grid */
.work { display: flex; flex: 1; min-height: 0; border-bottom: 1px solid #999; }
.sheet { position: relative; flex: 1; min-width: 0; overflow: hidden; background: #fff; border-right: 1px solid #999; }
table { table-layout: fixed; border-collapse: separate; border-spacing: 0; width: 0; }
.c-row { width: 23px; }
.c-data { width: 114px; }
thead th { height: 16px; padding: 0; border-right: 1px solid #ababab; background: #d2d2d2; color: #217346; font: 12px/14px "Open Sans", sans-serif; }
thead th:first-child { background: #e6e6e6 linear-gradient(135deg, transparent 50%, #b5b5b5 50%) no-repeat 12px 5px / 8px 8px; }
tbody th { height: 26px; padding: 0 0 1px; vertical-align: bottom; background: #e6e6e6; border-right: 1px solid #999; border-bottom: 1px solid #c6c6c6; font: 11px/12px "Noto Sans CJK SC", sans-serif; color: #222; }
tbody td { height: 26px; padding: 0; text-align: center; overflow: hidden; white-space: nowrap; border-right: 1px solid #d4d4d4; border-bottom: 1px solid #d4d4d4; font: 15px/20px "Noto Sans CJK SC", sans-serif; color: #111; }
.sel th { background: #d3f0e0; color: #217346; }
.sel:nth-child(5) th { background: #9fd5b7; }
.sel td { background: #c6c6c6; border-color: #a6a6a6; }
.sel:first-child td { background: #fff; }
.selection { position: absolute; left: 21px; right: 0; top: 14px; height: 133px; border: 2px solid #217346; border-right: 0; }
.vscroll { display: flex; flex-direction: column; width: 14px; margin: 2px 0 0 3px; background: #dadada; }
.vscroll button { height: 15px; background: #fff; border: 1px solid #ababab; }
.vthumb { height: 211px; background: #fff; border: 1px solid #ababab; }
.vtrack { flex: 1; }

/* sheet tabs */
.sheets { display: flex; flex: none; height: 28px; padding-right: 17px; border-bottom: 1px solid #c6c6c6; font-size: 13px; }
.nav { display: flex; width: 101px; padding-left: 27px; gap: 23px; align-items: center; background: linear-gradient(#999, #999) no-repeat right 4px / 1px 20px; }
.tri { width: 0; height: 0; border: 4px solid transparent; }
.tri.l { border-right-color: #bbb; border-left: 0; }
.tri.r { border-left-color: #bbb; border-right: 0; }
.tri.l.k { border-right-color: #555; }
.tri.r.k { border-left-color: #555; }
.tab { height: 25px; padding: 0 12px 1px 11px; background: linear-gradient(#999, #999) no-repeat right 4px / 1px 20px; }
.tab.current { background: #fff; color: #217346; padding: 1px 11px 0; border: solid #999; border-width: 0 1px; border-bottom: 2px solid #217346; }
.tab.latin { width: 69px; }
.tab.blue, .tab.orange { padding: 0 3px 0 2px; color: #000; }
.tab span { padding: 0 10px; line-height: 22px; margin-top: 3px; }
.blue span { background: #bdd7ee; }
.orange span { background: #f4b084; }
.add { margin-left: 33px; }
.push { margin-left: auto; }
.hscroll { display: flex; width: 509px; height: 15px; margin-top: 7px; background: #dadada; }
.hscroll button { width: 15px; background: #fff; border: 1px solid #ababab; }
.hthumb { width: 17px; background: #fff; border: 1px solid #ababab; }
.htrack { flex: 1; }

/* status bar */
.status { display: flex; flex: none; align-items: center; height: 19px; padding: 0 22px 0 7px; gap: 18px; background: #f1f1f1; }
.stats { display: flex; gap: 17px; margin-left: auto; }
.views { display: flex; }
.views button { width: 38px; height: 19px; }
.slider { display: flex; align-items: center; gap: 3px; margin-left: -15px; }
.slider button { width: 10px; height: 16px; }
.slider input { appearance: none; width: 100px; height: 14px; margin: 0; background: linear-gradient(#999, #999) no-repeat center / 100% 1px; }
.slider input::-webkit-slider-thumb { appearance: none; width: 4px; height: 12px; background: #555; }

/* floating toolbar and context menu */
.mini { position: absolute; left: 18px; top: 259px; width: 270px; height: 56px; padding: 3px 2px; background: #fff; border: 1px solid #c6c6c6; box-shadow: 1px 1px 3px #0003; }
.mini .row { height: 24px; }
.m-font { width: 69px; }
.m-size { width: 50px; margin: 0 1px 0 -1px; }
.menu { position: absolute; left: 18px; top: 330px; width: 165px; padding: 2px 1px 1px; background: #fff; border: 1px solid #c6c6c6; box-shadow: 2px 2px 4px #0004; color: #5a5a5a; }
.menu button { width: 100%; height: 25px; justify-content: flex-start; padding: 0 0 1px 31px; }
.menu button > svg { width: 16px; margin: 0 10px 0 -26px; }
.menu .hover { background: #c6c6c6; color: #333; }
.menu hr { height: 1px; margin: 0 0 1px 31px; border: 0; background: #e0e0e0; }
.menu .head { display: flex; align-items: center; height: 24px; padding-left: 5px; gap: 4px; }
.menu .head strong { flex: 1; padding-left: 8px; line-height: 24px; background: #ebebeb; }
.menu .icon { height: 29px; }
.menu .icon > svg { width: 22px; margin: 0; }
.arrow { position: absolute; left: 14px; top: 326px; filter: drop-shadow(4px 2px 3px #0006); }
.pointer { position: absolute; left: 129px; top: 576px; }
.watermark { position: absolute; right: 11px; bottom: 8px; display: flex; align-items: center; opacity: .85; pointer-events: none; }
.watermark p { margin: 0; display: flex; flex-direction: column; }
.watermark b { font-size: 21px; line-height: 24px; color: #3a7bc2; }
.watermark em { font: 700 17px/19px "Liberation Sans", sans-serif; color: #5fbf6a; }
```
FILE: script.js
```js
// Fills the worksheet grid: column letters, the merged title row and the staff records.
const title = "XXX公司员工信息";
const fields = "编号 岗位 工号 姓名 性别 年龄 学历 省 市 考核成绩 等级 出勤天数 奖金 薪资 薪资高于5000".split(" ");
const staff = `工程师 5 小G 女 30 硕士 吉林省 长春市 91 优秀 21 200 6200
工程师 6 小F 女 22 专科 辽宁省 沈阳市 90 优秀 21 200 6100
工程师 24 小韦 男 36 硕士 福建省 厦门市 95 优秀 28 200 10100
工人 25 郑二 女 24 本科 湖南省 长沙市 66 及格 21 0 3900
工人 3 小张 男 30 专科 山东省 青岛市 64 及格 21 0 4100
工人 8 李四 男 36 本科 四川省 成都市 66 及格 22 0 3900
工人 9 小A 女 22 本科 湖北省 武汉市 58 不及格 22 0 4100
工人 10 赵六 女 22 本科 吉林省 长春市 65 及格 22 0 4600
工人 12 张三 女 25 专科 吉林省 长春市 80 良好 22 200 5100
工人 13 小E 男 25 本科 吉林省 长春市 79 及格 22 0 4400
工人 16 小C 男 22 硕士 湖南省 长沙市 87 良好 23 200 5000
工人 19 冯十 男 28 专科 四川省 成都市 89 良好 24 200 5400
技术员 1 小王 女 28 本科 湖北省 武汉市 66 及格 20 0 4600
技术员 4 陈一 女 22 本科 湖南省 长沙市 57 不及格 21 0 4100
技术员 11 王五 女 33 硕士 四川省 成都市 64 及格 22 0 4300
技术员 14 小D 女 36 硕士 四川省 成都市 80 良好 23 200 5100
技术员 15 杨十四 女 33 专科 湖北省 武汉市 87 良好 23 200 5300
技术员 17 李六 女 28 硕士 辽宁省 沈阳市 66 及格 23 200 4300
技术员 18 小B 男 22 专科 江苏省 南京市 66 及格 24 200 4600
技术员 20 吴九 女 22 硕士 福建省 厦门市 66 及格 25 200 4600
技术员 21 小红 男 26 专科 江苏省 南京市 87 良好 21 200 5900
技术员 23 小李 男 22 硕士 山东省 青岛市 89 良好 26 200 6000
助工 7 小明 男 28 本科 江苏省 南京市 78 及格 21 0 4900
助工 22 孙七 男 30 本科 山东省 青岛市 77 及格 26 200 4900`.split("\n").map(line => {
  const r = line.split(" ");
  const pay = Number(r[r.length - 1]);
  return ["A" + r[1].padStart(2, "0"), ...r, pay > 5000 ? "TRUE" : "FALSE"];
});
const columns = 16;
const rows = 30;
const group = document.querySelector("colgroup");
const letters = document.getElementById("letters");
letters.append(document.createElement("th"));
for (let c = 0; c < columns; c++) {
  const col = document.createElement("col");
  col.className = "c-data";
  group.append(col);
  const th = document.createElement("th");
  th.textContent = String.fromCharCode(65 + c);
  letters.append(th);
}
const body = document.getElementById("cells");
const records = [null, fields, ...staff];
for (let n = 0; n < rows; n++) {
  const tr = body.insertRow();
  if (n < 5) tr.className = "sel";
  const th = document.createElement("th");
  th.textContent = n + 1;
  tr.append(th);
  if (n === 0) {
    const td = tr.insertCell();
    td.colSpan = columns;
    td.textContent = title;
    continue;
  }
  for (let c = 0; c < columns; c++) tr.insertCell().textContent = (records[n] || [])[c] ?? "";
}
```
